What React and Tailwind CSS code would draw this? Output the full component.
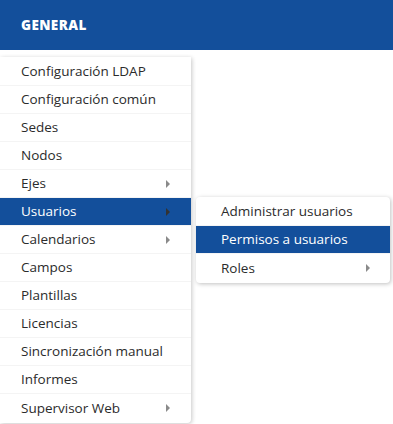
const items = [
  { label: "Configuración LDAP" },
  { label: "Configuración común" },
  { label: "Sedes" },
  { label: "Nodos" },
  { label: "Ejes", sub: true },
  { label: "Usuarios", sub: true, active: true },
  { label: "Calendarios", sub: true },
  { label: "Campos" },
  { label: "Plantillas" },
  { label: "Licencias" },
  { label: "Sincronización manual" },
  { label: "Informes" },
  { label: "Supervisor Web", sub: true },
];

const subItems = [
  { label: "Administrar usuarios" },
  { label: "Permisos a usuarios", active: true },
  { label: "Roles", sub: true },
];

const Caret = ({ active }) => (
  <svg width="4" height="8" viewBox="0 0 4 8" className={active ? "text-[#333]" : "text-[#8a8a8a]"}>
    <path d="M0 0 L4 4 L0 8 Z" fill="currentColor" />
  </svg>
);

const Row = ({ item, pad }) => (
  <div
    className={
      "h-[28px] flex items-center justify-between border-b border-[#f4f4f4] last:border-b-0 " +
      pad +
      (item.active ? " bg-[#134f9b] text-white border-[#134f9b]" : " text-[#2b2b2b]")
    }
  >
    <span>{item.label}</span>
    {item.sub && <Caret active={item.active} />}
  </div>
);

export default function App() {
  return (
    <div className="w-[393px] h-[424px] bg-white overflow-hidden relative text-[13.5px]" style={{ fontFamily: '"Open Sans", "Noto Sans", sans-serif' }}>
      <div className="h-[50px] bg-[#134f9b] flex items-center pl-[21px]">
        <span className="text-white font-extrabold text-[13.5px] tracking-[0.4px]">GENERAL</span>
      </div>
      <div className="flex items-start pt-[7px]">
        <div className="w-[191px] bg-white rounded-br-[4px] shadow-[1px_1px_4px_rgba(0,0,0,0.22)] py-[1px]">
          {items.map((it) => (
            <Row key={it.label} item={it} pad="pl-[21px] pr-[21px]" />
          ))}
        </div>
      </div>
      <div className="absolute left-[196px] top-[197px] w-[194px] bg-white rounded-[4px] shadow-[1px_1px_4px_rgba(0,0,0,0.25)] py-[1px]">
        {subItems.map((it) => (
          <Row key={it.label} item={it} pad="pl-[25px] pr-[20px]" />
        ))}
      </div>
    </div>
  );
}
